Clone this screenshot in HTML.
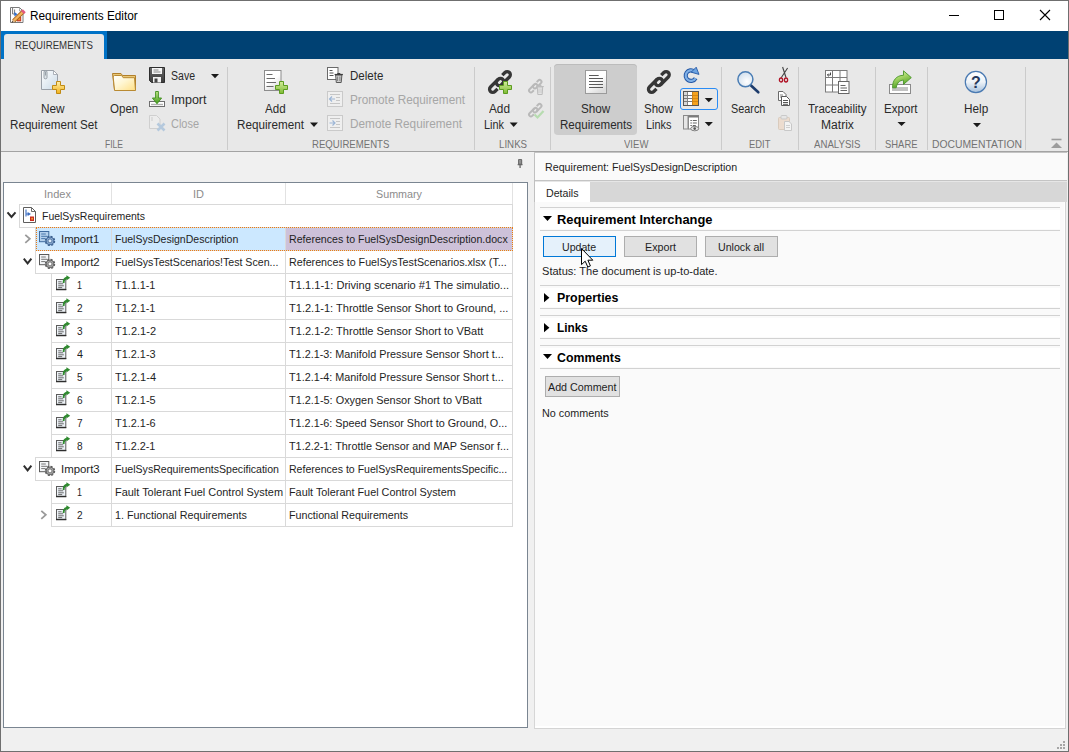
<!DOCTYPE html>
<html><head><meta charset="utf-8"><title>Requirements Editor</title>
<style>
html,body{margin:0;padding:0;}
body{width:1069px;height:752px;overflow:hidden;background:#f0f0f0;font-family:"Liberation Sans", sans-serif;position:relative;}
.t{position:absolute;white-space:pre;transform-origin:0 0;font-family:"Liberation Sans", sans-serif;}
.a{position:absolute;}
svg{position:absolute;overflow:visible;}
</style></head>
<body>
<div class="a" style="left:0px;top:0px;width:1069px;height:752px;background:#6f6f6f;"></div>
<div class="a" style="left:1px;top:1px;width:1067px;height:30px;background:#ffffff;"></div>
<div class="a" style="left:1px;top:31px;width:1067px;height:28px;background:#004173;"></div>
<div class="a" style="left:1px;top:31px;width:106px;height:28px;background:#0072c6;"></div>
<div class="a" style="left:4px;top:34px;width:100px;height:25px;background:#e8e8e8;border-radius:3px 3px 0 0;"></div>
<div class="a" style="left:1px;top:59px;width:1067px;height:92px;background:#e8e8e8;"></div>
<div class="a" style="left:1px;top:151px;width:1067px;height:1px;background:#a3a3a3;"></div>
<div class="a" style="left:1px;top:152px;width:1067px;height:599px;background:#f0f0f0;"></div>
<div class="a" style="left:227px;top:67px;width:1px;height:83px;background:#cbcbcb;"></div>
<div class="a" style="left:474px;top:67px;width:1px;height:83px;background:#cbcbcb;"></div>
<div class="a" style="left:550px;top:67px;width:1px;height:83px;background:#cbcbcb;"></div>
<div class="a" style="left:721px;top:67px;width:1px;height:83px;background:#cbcbcb;"></div>
<div class="a" style="left:798px;top:67px;width:1px;height:83px;background:#cbcbcb;"></div>
<div class="a" style="left:875px;top:67px;width:1px;height:83px;background:#cbcbcb;"></div>
<div class="a" style="left:927px;top:67px;width:1px;height:83px;background:#cbcbcb;"></div>
<div class="a" style="left:1025px;top:67px;width:1px;height:83px;background:#cbcbcb;"></div>
<div class="a" style="left:554px;top:64px;width:83px;height:71px;background:#cdcdcd;border-radius:4px;box-shadow:inset 0 1px 0 #bcbcbc;"></div>
<div class="a" style="left:680px;top:88px;width:38px;height:22px;background:transparent;box-sizing:border-box;border:1.5px solid #2a8cf5;border-radius:3px;"></div>
<div class="a" style="left:3px;top:182px;width:525px;height:546px;background:#ffffff;box-sizing:border-box;border:1px solid #7a8591;"></div>
<div class="a" style="left:111px;top:183px;width:1px;height:21px;background:#e2e2e2;"></div>
<div class="a" style="left:285px;top:183px;width:1px;height:21px;background:#e2e2e2;"></div>
<div class="a" style="left:512px;top:183px;width:1px;height:21px;background:#e2e2e2;"></div>
<div class="a" style="left:36px;top:227px;width:249px;height:23px;background:#cce8ff;"></div>
<div class="a" style="left:286px;top:227px;width:226px;height:23px;background:#cdc1d9;"></div>
<div class="a" style="left:19px;top:204px;width:494px;height:1px;background:#d9d9d9;"></div>
<div class="a" style="left:19px;top:227px;width:494px;height:1px;background:#d9d9d9;"></div>
<div class="a" style="left:35px;top:250px;width:478px;height:1px;background:#d9d9d9;"></div>
<div class="a" style="left:35px;top:273px;width:478px;height:1px;background:#d9d9d9;"></div>
<div class="a" style="left:51px;top:296px;width:462px;height:1px;background:#d9d9d9;"></div>
<div class="a" style="left:51px;top:319px;width:462px;height:1px;background:#d9d9d9;"></div>
<div class="a" style="left:51px;top:342px;width:462px;height:1px;background:#d9d9d9;"></div>
<div class="a" style="left:51px;top:365px;width:462px;height:1px;background:#d9d9d9;"></div>
<div class="a" style="left:51px;top:388px;width:462px;height:1px;background:#d9d9d9;"></div>
<div class="a" style="left:51px;top:411px;width:462px;height:1px;background:#d9d9d9;"></div>
<div class="a" style="left:51px;top:434px;width:462px;height:1px;background:#d9d9d9;"></div>
<div class="a" style="left:35px;top:457px;width:478px;height:1px;background:#d9d9d9;"></div>
<div class="a" style="left:35px;top:480px;width:478px;height:1px;background:#d9d9d9;"></div>
<div class="a" style="left:51px;top:503px;width:462px;height:1px;background:#d9d9d9;"></div>
<div class="a" style="left:51px;top:526px;width:462px;height:1px;background:#d9d9d9;"></div>
<div class="a" style="left:19px;top:204px;width:1px;height:24px;background:#d9d9d9;"></div>
<div class="a" style="left:512px;top:204px;width:1px;height:24px;background:#d9d9d9;"></div>
<div class="a" style="left:35px;top:227px;width:1px;height:24px;background:#d9d9d9;"></div>
<div class="a" style="left:512px;top:227px;width:1px;height:24px;background:#d9d9d9;"></div>
<div class="a" style="left:111px;top:227px;width:1px;height:24px;background:#d9d9d9;"></div>
<div class="a" style="left:285px;top:227px;width:1px;height:24px;background:#d9d9d9;"></div>
<div class="a" style="left:35px;top:250px;width:1px;height:24px;background:#d9d9d9;"></div>
<div class="a" style="left:512px;top:250px;width:1px;height:24px;background:#d9d9d9;"></div>
<div class="a" style="left:111px;top:250px;width:1px;height:24px;background:#d9d9d9;"></div>
<div class="a" style="left:285px;top:250px;width:1px;height:24px;background:#d9d9d9;"></div>
<div class="a" style="left:51px;top:273px;width:1px;height:24px;background:#d9d9d9;"></div>
<div class="a" style="left:512px;top:273px;width:1px;height:24px;background:#d9d9d9;"></div>
<div class="a" style="left:111px;top:273px;width:1px;height:24px;background:#d9d9d9;"></div>
<div class="a" style="left:285px;top:273px;width:1px;height:24px;background:#d9d9d9;"></div>
<div class="a" style="left:51px;top:296px;width:1px;height:24px;background:#d9d9d9;"></div>
<div class="a" style="left:512px;top:296px;width:1px;height:24px;background:#d9d9d9;"></div>
<div class="a" style="left:111px;top:296px;width:1px;height:24px;background:#d9d9d9;"></div>
<div class="a" style="left:285px;top:296px;width:1px;height:24px;background:#d9d9d9;"></div>
<div class="a" style="left:51px;top:319px;width:1px;height:24px;background:#d9d9d9;"></div>
<div class="a" style="left:512px;top:319px;width:1px;height:24px;background:#d9d9d9;"></div>
<div class="a" style="left:111px;top:319px;width:1px;height:24px;background:#d9d9d9;"></div>
<div class="a" style="left:285px;top:319px;width:1px;height:24px;background:#d9d9d9;"></div>
<div class="a" style="left:51px;top:342px;width:1px;height:24px;background:#d9d9d9;"></div>
<div class="a" style="left:512px;top:342px;width:1px;height:24px;background:#d9d9d9;"></div>
<div class="a" style="left:111px;top:342px;width:1px;height:24px;background:#d9d9d9;"></div>
<div class="a" style="left:285px;top:342px;width:1px;height:24px;background:#d9d9d9;"></div>
<div class="a" style="left:51px;top:365px;width:1px;height:24px;background:#d9d9d9;"></div>
<div class="a" style="left:512px;top:365px;width:1px;height:24px;background:#d9d9d9;"></div>
<div class="a" style="left:111px;top:365px;width:1px;height:24px;background:#d9d9d9;"></div>
<div class="a" style="left:285px;top:365px;width:1px;height:24px;background:#d9d9d9;"></div>
<div class="a" style="left:51px;top:388px;width:1px;height:24px;background:#d9d9d9;"></div>
<div class="a" style="left:512px;top:388px;width:1px;height:24px;background:#d9d9d9;"></div>
<div class="a" style="left:111px;top:388px;width:1px;height:24px;background:#d9d9d9;"></div>
<div class="a" style="left:285px;top:388px;width:1px;height:24px;background:#d9d9d9;"></div>
<div class="a" style="left:51px;top:411px;width:1px;height:24px;background:#d9d9d9;"></div>
<div class="a" style="left:512px;top:411px;width:1px;height:24px;background:#d9d9d9;"></div>
<div class="a" style="left:111px;top:411px;width:1px;height:24px;background:#d9d9d9;"></div>
<div class="a" style="left:285px;top:411px;width:1px;height:24px;background:#d9d9d9;"></div>
<div class="a" style="left:51px;top:434px;width:1px;height:24px;background:#d9d9d9;"></div>
<div class="a" style="left:512px;top:434px;width:1px;height:24px;background:#d9d9d9;"></div>
<div class="a" style="left:111px;top:434px;width:1px;height:24px;background:#d9d9d9;"></div>
<div class="a" style="left:285px;top:434px;width:1px;height:24px;background:#d9d9d9;"></div>
<div class="a" style="left:35px;top:457px;width:1px;height:24px;background:#d9d9d9;"></div>
<div class="a" style="left:512px;top:457px;width:1px;height:24px;background:#d9d9d9;"></div>
<div class="a" style="left:111px;top:457px;width:1px;height:24px;background:#d9d9d9;"></div>
<div class="a" style="left:285px;top:457px;width:1px;height:24px;background:#d9d9d9;"></div>
<div class="a" style="left:51px;top:480px;width:1px;height:24px;background:#d9d9d9;"></div>
<div class="a" style="left:512px;top:480px;width:1px;height:24px;background:#d9d9d9;"></div>
<div class="a" style="left:111px;top:480px;width:1px;height:24px;background:#d9d9d9;"></div>
<div class="a" style="left:285px;top:480px;width:1px;height:24px;background:#d9d9d9;"></div>
<div class="a" style="left:51px;top:503px;width:1px;height:24px;background:#d9d9d9;"></div>
<div class="a" style="left:512px;top:503px;width:1px;height:24px;background:#d9d9d9;"></div>
<div class="a" style="left:111px;top:503px;width:1px;height:24px;background:#d9d9d9;"></div>
<div class="a" style="left:285px;top:503px;width:1px;height:24px;background:#d9d9d9;"></div>
<div class="a" style="left:36px;top:227px;width:477px;height:24px;background:transparent;box-sizing:border-box;border:1px dotted #ea7a12;"></div>
<div class="a" style="left:534px;top:152px;width:533px;height:50px;background:#fafafa;"></div>
<div class="a" style="left:534px;top:202px;width:532px;height:527px;background:#fafafa;box-sizing:border-box;border-right:1px solid #d4d4d4;border-bottom:1px solid #d4d4d4;"></div>
<div class="a" style="left:535px;top:726px;width:529px;height:2px;background:#ffffff;"></div>
<div class="a" style="left:1064px;top:202px;width:1px;height:526px;background:#ffffff;"></div>
<div class="a" style="left:534px;top:152px;width:1px;height:50px;background:#c0c0c0;"></div>
<div class="a" style="left:534px;top:202px;width:1px;height:527px;background:#d6d6d6;"></div>
<div class="a" style="left:534px;top:152px;width:533px;height:1px;background:#c4c4c4;"></div>
<div class="a" style="left:535px;top:180px;width:532px;height:1px;background:#c4c4c4;"></div>
<div class="a" style="left:535px;top:181px;width:532px;height:1px;background:#e6e6e6;"></div>
<div class="a" style="left:535px;top:182px;width:55px;height:20px;background:#ffffff;"></div>
<div class="a" style="left:590px;top:182px;width:477px;height:20px;background:#d7d7d7;"></div>
<div class="a" style="left:540px;top:207px;width:520px;height:1px;background:#d2d2d2;"></div>
<div class="a" style="left:540px;top:230px;width:520px;height:1px;background:#d2d2d2;"></div>
<div class="a" style="left:540px;top:210px;width:520px;height:19px;background:#ffffff;"></div>
<div class="a" style="left:540px;top:285px;width:520px;height:1px;background:#d2d2d2;"></div>
<div class="a" style="left:540px;top:308px;width:520px;height:1px;background:#d2d2d2;"></div>
<div class="a" style="left:540px;top:288px;width:520px;height:19px;background:#ffffff;"></div>
<div class="a" style="left:540px;top:315px;width:520px;height:1px;background:#d2d2d2;"></div>
<div class="a" style="left:540px;top:338px;width:520px;height:1px;background:#d2d2d2;"></div>
<div class="a" style="left:540px;top:318px;width:520px;height:19px;background:#ffffff;"></div>
<div class="a" style="left:540px;top:345px;width:520px;height:1px;background:#d2d2d2;"></div>
<div class="a" style="left:540px;top:368px;width:520px;height:1px;background:#d2d2d2;"></div>
<div class="a" style="left:540px;top:348px;width:520px;height:19px;background:#ffffff;"></div>
<div class="a" style="left:543px;top:236px;width:73px;height:21px;background:#e5f1fb;box-sizing:border-box;border:1px solid #0078d7;"></div>
<div class="a" style="left:624px;top:236px;width:73px;height:21px;background:#e1e1e1;box-sizing:border-box;border:1px solid #adadad;"></div>
<div class="a" style="left:705px;top:236px;width:73px;height:21px;background:#e1e1e1;box-sizing:border-box;border:1px solid #adadad;"></div>
<div class="a" style="left:545px;top:376px;width:75px;height:21px;background:#e1e1e1;box-sizing:border-box;border:1px solid #adadad;"></div>
<svg width="1069" height="752" viewBox="0 0 1069 752" style="left:0;top:0;">
<defs>
<linearGradient id="gdoc" x1="0" y1="0" x2="1" y2="1"><stop offset="0" stop-color="#ffffff"/><stop offset="1" stop-color="#c9d9e6"/></linearGradient>
<linearGradient id="gdocw" x1="0" y1="0" x2="0.6" y2="1"><stop offset="0.55" stop-color="#ffffff"/><stop offset="1" stop-color="#dcdcdc"/></linearGradient>
<linearGradient id="gyel" x1="0" y1="0" x2="0" y2="1"><stop offset="0" stop-color="#fff0a8"/><stop offset="1" stop-color="#f2b21c"/></linearGradient>
<linearGradient id="ggrn" x1="0" y1="0" x2="0" y2="1"><stop offset="0" stop-color="#d4ec9c"/><stop offset="1" stop-color="#7dbb33"/></linearGradient>
<linearGradient id="ggrn2" x1="0" y1="0" x2="0" y2="1"><stop offset="0" stop-color="#c6e88a"/><stop offset="1" stop-color="#3f9a18"/></linearGradient>
<linearGradient id="gfold" x1="0" y1="0" x2="1" y2="1"><stop offset="0" stop-color="#ffffff"/><stop offset="1" stop-color="#ffe28a"/></linearGradient>
<linearGradient id="gblue" x1="0" y1="0" x2="0" y2="1"><stop offset="0" stop-color="#9cc4ee"/><stop offset="1" stop-color="#2a63b4"/></linearGradient>
<radialGradient id="glens" cx="0.6" cy="0.65" r="0.7"><stop offset="0" stop-color="#ffffff"/><stop offset="1" stop-color="#cfdeec"/></radialGradient>
<linearGradient id="ghelp" x1="0" y1="0" x2="0" y2="1"><stop offset="0" stop-color="#ffffff"/><stop offset="0.5" stop-color="#eef3f8"/><stop offset="1" stop-color="#a4bfdc"/></linearGradient>
<linearGradient id="gexp" x1="0" y1="0" x2="0.4" y2="1"><stop offset="0" stop-color="#e6f5cc"/><stop offset="0.45" stop-color="#a9d86a"/><stop offset="1" stop-color="#4a9c1e"/></linearGradient>
<linearGradient id="gfold2" x1="0" y1="0" x2="1" y2="1"><stop offset="0" stop-color="#ffffff"/><stop offset="0.45" stop-color="#fff6d2"/><stop offset="1" stop-color="#ffdf85"/></linearGradient>
<linearGradient id="gsave" x1="0" y1="0" x2="0" y2="1"><stop offset="0" stop-color="#6a6a6a"/><stop offset="1" stop-color="#3c3c3c"/></linearGradient>
</defs><g transform="translate(10,7)"><path d="M0.5,0.5 h9 l3.5,3.5 v11.5 h-12.5 z" fill="#fff" stroke="#7a7a7a"/><path d="M9.5,0.5 v3.5 h3.5" fill="none" stroke="#9a9a9a" stroke-width="0.8"/><path d="M2.6,1 v6 h2" fill="none" stroke="#666" stroke-width="0.9"/><path d="M4.6,2.5 v5" stroke="#555" stroke-width="0.8"/><polygon points="4.4,5 7.6,7.2 4.4,9.6" fill="#2f6fd0"/><rect x="7" y="10" width="4.2" height="4.4" fill="#c83a22"/><rect x="8" y="11" width="2.2" height="2.2" fill="#ee8a2a"/><path d="M3.6,13.9 L13.3,4.6" stroke="#a8641e" stroke-width="4.2"/><path d="M3.9,13.6 L13,4.9" stroke="#f3b35c" stroke-width="2.2"/><path d="M12.4,5.5 L14.3,3.7" stroke="#e2587f" stroke-width="4.2"/><polygon points="1.6,15.8 2.6,12.2 5.4,14.8" fill="#d9b48a"/><polygon points="1.6,15.8 2.1,14 3.5,15.3" fill="#2a2a2a"/></g><path d="M949,15.5 h10" stroke="#000" stroke-width="1"/><rect x="994.5" y="10.5" width="9" height="9" fill="none" stroke="#000" stroke-width="1"/><path d="M1040,10 l10,10 M1050,10 l-10,10" stroke="#000" stroke-width="1.1"/><g transform="translate(41,70)"><path d="M0.5,0.5 h12 l4,4 v15 h-16 z" fill="url(#gdoc)" stroke="#9aa0a8"/><path d="M12.5,0.5 v4 h4 z" fill="#ffffff" stroke="#9aa0a8" stroke-width="0.8"/><rect x="3" y="0.8" width="3" height="8" rx="1.2" fill="#dfe5ea" stroke="#8f979f" stroke-width="0.9"/><path d="M4.5,1.5 v4" stroke="#9aa2aa" stroke-width="1"/></g><g transform="translate(52,81)"><path d="M4.5,0.5 h4 v4 h4 v4 h-4 v4 h-4 v-4 h-4 v-4 h4 z" fill="url(#gyel)" stroke="#c08a14"/></g><g transform="translate(112,70)"><path d="M0.5,3.5 h8.5 l1.5,2 h13 v14.5 h-21 z" fill="#e9c878" stroke="#b17f2a"/><path d="M2.6,20.5 L1.2,7 Q1.1,5.5 2.6,5.5 h7 l1.6,2.2 h11.3 L23.5,20.5 z" fill="url(#gfold2)" stroke="#b98a32"/></g><g transform="translate(149,67)"><path d="M0.5,0.5 h15 v15 h-13 l-2,-2 z" fill="url(#gsave)" stroke="#2e2e2e"/><rect x="3" y="1" width="10" height="6" fill="#f6f6f6"/><path d="M4.5,3 h5 M4.5,5 h7" stroke="#8a8a8a" stroke-width="1"/><rect x="4" y="10" width="8" height="5.5" fill="#f2f2f2"/><rect x="5.5" y="11.5" width="3" height="4" fill="#444"/></g><polygon points="211,74 219,74 215.0,78.3" fill="#1a1a1a"/><g transform="translate(149,91)"><rect x="0.5" y="10.5" width="15" height="5" fill="#ffffff" stroke="#6e6e6e"/><path d="M2,13.5 h12" stroke="#b0b0b0" stroke-width="1.4"/><path d="M6.6,0.5 h2.8 v6.5 h3.2 L8,12.8 L3.4,7 h3.2 z" fill="url(#ggrn2)" stroke="#3c8c1c" stroke-width="0.9"/></g><g transform="translate(149,115)"><path d="M0.5,0.5 h7 l3.5,3.5 v9.5 h-10.5 z" fill="#ececec" stroke="#cfcfcf"/><path d="M3,2 v4" stroke="#d2d2d2" stroke-width="1.2"/><path d="M8.5,8.5 l7,7 M15.5,8.5 l-7,7" stroke="#b5c9dd" stroke-width="2.6"/></g><g transform="translate(264,70)"><rect x="0.5" y="0.5" width="16.5" height="20" fill="url(#gdocw)" stroke="#8c8c8c"/><path d="M2.5,4.5 h6 M2.5,8.5 h8.5 M2.5,12.5 h9.5 M2.5,16.5 h7" stroke="#6a6a6a" stroke-width="1"/></g><g transform="translate(275,81)"><path d="M4.5,0.5 h4 v4 h4 v4 h-4 v4 h-4 v-4 h-4 v-4 h4 z" fill="url(#ggrn)" stroke="#5c9c20"/></g><polygon points="310,122.6 318,122.6 314.0,127.0" fill="#1a1a1a"/><g transform="translate(327,67)"><rect x="0.5" y="0.5" width="10.5" height="12" fill="#ffffff" stroke="#6a6a6a"/><path d="M2.5,3.5 h3 M2.5,6 h4 M2.5,8.5 h4" stroke="#555" stroke-width="1"/><path d="M8.6,8 h6.3 l-0.7,7.5 h-4.9 z" fill="#cfcfcf" stroke="#4a4a4a" stroke-width="0.9"/><path d="M7.6,7.5 h8.3" stroke="#3e3e3e" stroke-width="1.2"/><path d="M10.3,6.6 h3" stroke="#3e3e3e" stroke-width="1.2"/><path d="M10.6,9.5 v4.5 M12.9,9.5 v4.5" stroke="#6a6a6a" stroke-width="0.8"/></g><g transform="translate(327,91)"><rect x="0.5" y="0.5" width="15" height="15" fill="#efefef" stroke="#cacaca"/><path d="M3,3.5 h10 M9,6.5 h4 M9,9.5 h4 M3,12.5 h10" stroke="#c6c6c6" stroke-width="1"/><path d="M2.5,8 h5.5 M5,5.5 L2.5,8 L5,10.5" fill="none" stroke="#9db6d6" stroke-width="1.2"/></g><g transform="translate(327,115)"><rect x="0.5" y="0.5" width="15" height="15" fill="#efefef" stroke="#cacaca"/><path d="M3,3.5 h10 M9,6.5 h4 M9,9.5 h4 M3,12.5 h10" stroke="#c6c6c6" stroke-width="1"/><path d="M2.5,8 h5.5 M5.5,5.5 L8,8 L5.5,10.5" fill="none" stroke="#9db6d6" stroke-width="1.2"/></g><g transform="translate(488,70)"><g transform="translate(11.95,12.0) rotate(-45)" fill="none" stroke="#363636" stroke-width="3.3"><path d="M-6.5,3.15 L-10.25,3.15 A3.15,3.15 0 0 1 -10.25,-3.15 L0.75,-3.15 A3.15,3.15 0 0 1 0.75,3.15 L-0.9,3.15"/><path d="M6.5,-3.15 L10.25,-3.15 A3.15,3.15 0 0 1 10.25,3.15 L-0.75,3.15 A3.15,3.15 0 0 1 -0.75,-3.15 L0.9,-3.15"/></g></g><g transform="translate(499,81)"><path d="M4.5,0.5 h4 v4 h4 v4 h-4 v4 h-4 v-4 h-4 v-4 h4 z" fill="url(#ggrn)" stroke="#5c9c20"/></g><polygon points="509.7,122.6 517.7,122.6 513.7,127.0" fill="#1a1a1a"/><g transform="translate(528,79)"><g transform="scale(0.6)"><g transform="translate(12.1,12.0) rotate(-45)" fill="none" stroke="#b9b9b9" stroke-width="3.2"><path d="M-6.5,3.15 L-10.25,3.15 A3.15,3.15 0 0 1 -10.25,-3.15 L0.75,-3.15 A3.15,3.15 0 0 1 0.75,3.15 L-0.9,3.15"/><path d="M6.5,-3.15 L10.25,-3.15 A3.15,3.15 0 0 1 10.25,3.15 L-0.75,3.15 A3.15,3.15 0 0 1 -0.75,-3.15 L0.9,-3.15"/></g></g><path d="M9.3,8 h5.4 l-0.5,7.5 h-4.4 z" fill="#e4e4e4" stroke="#bdbdbd" stroke-width="1"/><path d="M8.2,7.5 h7.6 M10.6,6.3 h2.8" stroke="#bdbdbd" stroke-width="1.2"/><path d="M11,9.5 v4.5 M13,9.5 v4.5" stroke="#c4c4c4" stroke-width="0.8"/></g><g transform="translate(528,103)"><g transform="scale(0.6)"><g transform="translate(12.1,12.0) rotate(-45)" fill="none" stroke="#b9b9b9" stroke-width="3.2"><path d="M-6.5,3.15 L-10.25,3.15 A3.15,3.15 0 0 1 -10.25,-3.15 L0.75,-3.15 A3.15,3.15 0 0 1 0.75,3.15 L-0.9,3.15"/><path d="M6.5,-3.15 L10.25,-3.15 A3.15,3.15 0 0 1 10.25,3.15 L-0.75,3.15 A3.15,3.15 0 0 1 -0.75,-3.15 L0.9,-3.15"/></g></g><path d="M6.5,11.5 L9.5,14.5 L15.5,8" fill="none" stroke="#b7dcb0" stroke-width="2.2"/></g><g transform="translate(585,70)"><rect x="0.5" y="0.5" width="21" height="23" fill="url(#gdocw)" stroke="#9a9a9a"/><path d="M4,5.5 h9.7 M4,8.5 h14 M4,11.5 h14 M4,14.5 h14 M4,17.5 h14" stroke="#5a5a5a" stroke-width="1"/></g><g transform="translate(646.7,70)"><g transform="translate(12.15,12.0) rotate(-45)" fill="none" stroke="#363636" stroke-width="3.3"><path d="M-6.5,3.15 L-10.25,3.15 A3.15,3.15 0 0 1 -10.25,-3.15 L0.75,-3.15 A3.15,3.15 0 0 1 0.75,3.15 L-0.9,3.15"/><path d="M6.5,-3.15 L10.25,-3.15 A3.15,3.15 0 0 1 10.25,3.15 L-0.75,3.15 A3.15,3.15 0 0 1 -0.75,-3.15 L0.9,-3.15"/></g></g><g transform="translate(683,67)"><path d="M11.2,4.4 A5.3,5.3 0 1 0 12.6,11.2" fill="none" stroke="#2659a6" stroke-width="4.2"/><path d="M11.2,4.4 A5.3,5.3 0 1 0 12.6,11.2" fill="none" stroke="#7fb0e6" stroke-width="2.2"/><polygon points="8.2,5.2 13.2,0.2 16,7.4" fill="#6da4e2" stroke="#2659a6" stroke-width="0.9"/></g><g transform="translate(683,91)"><rect x="0.5" y="0.5" width="15" height="14" fill="#ffffff" stroke="#555"/><rect x="1" y="1" width="3.5" height="13" fill="#d8d8d8"/><rect x="9.5" y="1" width="5.5" height="13" fill="#f5a21e"/><path d="M1,4.5 h14 M1,7.5 h14 M1,10.5 h14" stroke="#7a7a7a" stroke-width="1"/><path d="M9.5,1 v13" stroke="#c67a10" stroke-width="0.9"/><path d="M4.5,1 v13" stroke="#7a7a7a" stroke-width="0.9"/><path d="M9.5,4.5 h5.5 M9.5,7.5 h5.5 M9.5,10.5 h5.5" stroke="#d88912" stroke-width="1"/><rect x="0.5" y="0.5" width="15" height="14" fill="none" stroke="#555"/></g><polygon points="704.7,98 712.9,98 708.8,102.3" fill="#1a1a1a"/><g transform="translate(683,115)"><rect x="0.5" y="0.5" width="4.5" height="13.5" fill="#e6e6e6" stroke="#8a8a8a"/><rect x="5.5" y="0.5" width="10" height="13.5" fill="#ffffff" stroke="#8a8a8a"/><rect x="5.5" y="0.5" width="10" height="2" fill="#7a7a7a"/><path d="M7.5,5.5 h1.2 M7.5,8 h1.2 M7.5,10.5 h1.2" stroke="#444" stroke-width="1.2"/><path d="M9.8,5.5 h4 M9.8,8 h4 M9.8,10.5 h3" stroke="#666" stroke-width="1"/><ellipse cx="11.7" cy="13.6" rx="4" ry="2.2" fill="#e6e6e6" stroke="#777" stroke-width="0.9"/><circle cx="11.7" cy="13.6" r="1.3" fill="#555"/></g><polygon points="704.7,122 712.9,122 708.8,126.3" fill="#1a1a1a"/><g transform="translate(737,70)"><path d="M14,15.5 L21.3,22.3" stroke="#1d3c6c" stroke-width="2.6" stroke-linecap="round"/><circle cx="8.4" cy="9.3" r="7.5" fill="url(#glens)" stroke="#4a7db4" stroke-width="1.5"/></g><g transform="translate(778,67)"><path d="M4.6,0 L8,10.5 M9.6,1 L3.2,10.8" stroke="#444" stroke-width="1.1"/><ellipse cx="3" cy="13" rx="1.6" ry="2" fill="none" stroke="#b01224" stroke-width="1.3"/><ellipse cx="8" cy="13" rx="1.6" ry="2" fill="none" stroke="#b01224" stroke-width="1.3"/></g><g transform="translate(778,91)"><path d="M0.5,0.5 h4.5 l3,3 v6 h-7.5 z" fill="#fff" stroke="#6a6a6a"/><path d="M2,4 h3 M2,6 h4" stroke="#777" stroke-width="0.9"/><path d="M3.5,5.5 h5 l3,3 v6 h-8 z" fill="#fff" stroke="#5a5a5a"/><path d="M5,9.5 h5 M5,11.5 h5 M5,13.3 h5" stroke="#555" stroke-width="1"/></g><g transform="translate(778,115)"><rect x="0.5" y="2.5" width="11" height="12" rx="1" fill="#ecdccf" stroke="#d9cbbd"/><rect x="3" y="0.5" width="6" height="3.5" rx="1" fill="#e6e6e6" stroke="#c9c9c9"/><path d="M6.5,6.5 h4.5 l2.5,2.5 v6.5 h-7 z" fill="#f3f3f3" stroke="#c8c8c8"/><path d="M8,10.5 h4 M8,12.5 h4" stroke="#cfcfcf" stroke-width="1"/></g><g transform="translate(825,70)"><rect x="0.5" y="0.5" width="21.5" height="21.5" fill="#ffffff" stroke="#7a7a7a"/><path d="M7.5,0.5 v21.5 M15,0.5 v21.5 M0.5,7.5 h21.5 M0.5,15 h21.5" stroke="#7a7a7a" stroke-width="1"/><path d="M5.5,2.5 v2.5 h-3 M3.8,3.6 L2.4,5 L3.8,6.4" fill="none" stroke="#333" stroke-width="0.9"/><rect x="13.5" y="11.5" width="10.5" height="12" fill="#ffffff" stroke="#666"/><path d="M15.5,15.5 h5 M15.5,18 h6.5 M15.5,20.5 h6.5" stroke="#666" stroke-width="1"/></g><g transform="translate(888,70)"><rect x="1.5" y="14.5" width="21" height="9" fill="#ffffff" stroke="#8a8a8a"/><rect x="4" y="17" width="16" height="4" fill="#c2c2c2"/><path d="M4.6,17.8 C4.2,10.5 8.5,5.3 15.5,5.3 V0.8 L23.3,7.6 L15.5,14.4 V10.2 C11.8,10.2 9.2,12.3 8.2,17.8 Z" fill="url(#gexp)" stroke="#4a962a" stroke-width="0.9"/></g><polygon points="897.5,122 905.6,122 901.55,126" fill="#1a1a1a"/><g transform="translate(964,70)"><circle cx="11.9" cy="12" r="10.6" fill="url(#ghelp)" stroke="#4a7ab2" stroke-width="1.2"/><text x="12" y="17.7" text-anchor="middle" font-family="Liberation Sans, sans-serif" font-weight="700" font-size="16" fill="#27395c">?</text></g><polygon points="973,123 981,123 977.0,127.2" fill="#1a1a1a"/><path d="M1051.5,139.5 h10" stroke="#9c9c9c" stroke-width="1.6"/><polygon points="1051,148 1062,148 1056.5,142.5" fill="#9c9c9c"/><rect x="518" y="159" width="4.2" height="6.2" rx="1" fill="#6e6e6e"/><rect x="519.4" y="160" width="1.2" height="3.6" fill="#a8a8a8"/><path d="M517.6,164.7 h5" stroke="#666" stroke-width="1"/><rect x="519.3" y="165" width="1.6" height="3" fill="#808080"/><polyline points="7.5,212.3 11.5,217 15.5,212.3" fill="none" stroke="#2e2e2e" stroke-width="2.0"/><polyline points="25.3,234.8 29.8,238.8 25.3,242.8" fill="none" stroke="#9a9a9a" stroke-width="1.8"/><polyline points="23.8,258.7 27.6,263.4 31.4,258.7" fill="none" stroke="#2e2e2e" stroke-width="2.0"/><polyline points="23.8,465.7 27.6,470.4 31.4,465.7" fill="none" stroke="#2e2e2e" stroke-width="2.0"/><polyline points="41.3,510.8 45.8,514.8 41.3,518.8" fill="none" stroke="#9a9a9a" stroke-width="1.8"/><g transform="translate(23,207)"><path d="M0.5,0.5 h8 l4,4 v11 h-12 z" fill="#fff" stroke="#5e5e5e"/><path d="M8.5,0.5 v4 h4" fill="none" stroke="#5e5e5e" stroke-width="0.9"/><path d="M3,2.5 v7 M3,7 h2.5" stroke="#3a6cc0" stroke-width="1.1" fill="none"/><polygon points="4.6,5 8,7 4.6,9" fill="#3a6cc0"/><rect x="7" y="9.5" width="4" height="4.5" fill="#c8281e"/><rect x="8.2" y="10.8" width="1.8" height="1.8" fill="#f0a030"/></g><g transform="translate(39,227)"><rect x="0.5" y="4.5" width="9.3" height="10.2" fill="#b4d0ec" stroke="#3f6b9f"/><path d="M2.2,7 h4.6 M2.2,9.3 h6 M2.2,11.6 h4" stroke="#4a78ac" stroke-width="1"/><circle cx="11" cy="13.9" r="4.2" fill="none" stroke="#3a5f8f" stroke-width="2.0" stroke-dasharray="1.9 1.4"/><circle cx="11" cy="13.9" r="3.9" fill="#8fb0d6" stroke="#3a5f8f" stroke-width="0.9"/><circle cx="11" cy="13.9" r="2.0" fill="#dcecfb" stroke="#3a5f8f" stroke-width="0.8"/></g><g transform="translate(39,250)"><rect x="0.5" y="4.5" width="9.3" height="10.2" fill="#f4f6f8" stroke="#5a5a5a"/><path d="M2.2,7 h4.6 M2.2,9.3 h6 M2.2,11.6 h4" stroke="#777777" stroke-width="1"/><circle cx="11" cy="13.9" r="4.2" fill="none" stroke="#5c5c5c" stroke-width="2.0" stroke-dasharray="1.9 1.4"/><circle cx="11" cy="13.9" r="3.9" fill="#ababab" stroke="#5c5c5c" stroke-width="0.9"/><circle cx="11" cy="13.9" r="2.0" fill="#ffffff" stroke="#5c5c5c" stroke-width="0.8"/></g><g transform="translate(56,273)"><rect x="0.5" y="6.5" width="9.3" height="9.8" fill="#eef3f8" stroke="#5c5c5c"/><path d="M0,16.6 h10.3" stroke="#2e2e2e" stroke-width="1.3"/><path d="M2.2,8.8 h3.4 M2.2,10.8 h5 M2.2,12.8 h5.6 M2.2,14.6 h4" stroke="#5a5a5a" stroke-width="0.9"/><path d="M7.6,10 C7.6,6.8 9,5 11.2,4.8" fill="none" stroke="#2f8a2f" stroke-width="1.9"/><polygon points="10.4,2.2 14.2,4.8 10.4,7.4" fill="#2f8a2f"/></g><g transform="translate(56,296)"><rect x="0.5" y="6.5" width="9.3" height="9.8" fill="#eef3f8" stroke="#5c5c5c"/><path d="M0,16.6 h10.3" stroke="#2e2e2e" stroke-width="1.3"/><path d="M2.2,8.8 h3.4 M2.2,10.8 h5 M2.2,12.8 h5.6 M2.2,14.6 h4" stroke="#5a5a5a" stroke-width="0.9"/><path d="M7.6,10 C7.6,6.8 9,5 11.2,4.8" fill="none" stroke="#2f8a2f" stroke-width="1.9"/><polygon points="10.4,2.2 14.2,4.8 10.4,7.4" fill="#2f8a2f"/></g><g transform="translate(56,319)"><rect x="0.5" y="6.5" width="9.3" height="9.8" fill="#eef3f8" stroke="#5c5c5c"/><path d="M0,16.6 h10.3" stroke="#2e2e2e" stroke-width="1.3"/><path d="M2.2,8.8 h3.4 M2.2,10.8 h5 M2.2,12.8 h5.6 M2.2,14.6 h4" stroke="#5a5a5a" stroke-width="0.9"/><path d="M7.6,10 C7.6,6.8 9,5 11.2,4.8" fill="none" stroke="#2f8a2f" stroke-width="1.9"/><polygon points="10.4,2.2 14.2,4.8 10.4,7.4" fill="#2f8a2f"/></g><g transform="translate(56,342)"><rect x="0.5" y="6.5" width="9.3" height="9.8" fill="#eef3f8" stroke="#5c5c5c"/><path d="M0,16.6 h10.3" stroke="#2e2e2e" stroke-width="1.3"/><path d="M2.2,8.8 h3.4 M2.2,10.8 h5 M2.2,12.8 h5.6 M2.2,14.6 h4" stroke="#5a5a5a" stroke-width="0.9"/><path d="M7.6,10 C7.6,6.8 9,5 11.2,4.8" fill="none" stroke="#2f8a2f" stroke-width="1.9"/><polygon points="10.4,2.2 14.2,4.8 10.4,7.4" fill="#2f8a2f"/></g><g transform="translate(56,365)"><rect x="0.5" y="6.5" width="9.3" height="9.8" fill="#eef3f8" stroke="#5c5c5c"/><path d="M0,16.6 h10.3" stroke="#2e2e2e" stroke-width="1.3"/><path d="M2.2,8.8 h3.4 M2.2,10.8 h5 M2.2,12.8 h5.6 M2.2,14.6 h4" stroke="#5a5a5a" stroke-width="0.9"/><path d="M7.6,10 C7.6,6.8 9,5 11.2,4.8" fill="none" stroke="#2f8a2f" stroke-width="1.9"/><polygon points="10.4,2.2 14.2,4.8 10.4,7.4" fill="#2f8a2f"/></g><g transform="translate(56,388)"><rect x="0.5" y="6.5" width="9.3" height="9.8" fill="#eef3f8" stroke="#5c5c5c"/><path d="M0,16.6 h10.3" stroke="#2e2e2e" stroke-width="1.3"/><path d="M2.2,8.8 h3.4 M2.2,10.8 h5 M2.2,12.8 h5.6 M2.2,14.6 h4" stroke="#5a5a5a" stroke-width="0.9"/><path d="M7.6,10 C7.6,6.8 9,5 11.2,4.8" fill="none" stroke="#2f8a2f" stroke-width="1.9"/><polygon points="10.4,2.2 14.2,4.8 10.4,7.4" fill="#2f8a2f"/></g><g transform="translate(56,411)"><rect x="0.5" y="6.5" width="9.3" height="9.8" fill="#eef3f8" stroke="#5c5c5c"/><path d="M0,16.6 h10.3" stroke="#2e2e2e" stroke-width="1.3"/><path d="M2.2,8.8 h3.4 M2.2,10.8 h5 M2.2,12.8 h5.6 M2.2,14.6 h4" stroke="#5a5a5a" stroke-width="0.9"/><path d="M7.6,10 C7.6,6.8 9,5 11.2,4.8" fill="none" stroke="#2f8a2f" stroke-width="1.9"/><polygon points="10.4,2.2 14.2,4.8 10.4,7.4" fill="#2f8a2f"/></g><g transform="translate(56,434)"><rect x="0.5" y="6.5" width="9.3" height="9.8" fill="#eef3f8" stroke="#5c5c5c"/><path d="M0,16.6 h10.3" stroke="#2e2e2e" stroke-width="1.3"/><path d="M2.2,8.8 h3.4 M2.2,10.8 h5 M2.2,12.8 h5.6 M2.2,14.6 h4" stroke="#5a5a5a" stroke-width="0.9"/><path d="M7.6,10 C7.6,6.8 9,5 11.2,4.8" fill="none" stroke="#2f8a2f" stroke-width="1.9"/><polygon points="10.4,2.2 14.2,4.8 10.4,7.4" fill="#2f8a2f"/></g><g transform="translate(39,457)"><rect x="0.5" y="4.5" width="9.3" height="10.2" fill="#f4f6f8" stroke="#5a5a5a"/><path d="M2.2,7 h4.6 M2.2,9.3 h6 M2.2,11.6 h4" stroke="#777777" stroke-width="1"/><circle cx="11" cy="13.9" r="4.2" fill="none" stroke="#5c5c5c" stroke-width="2.0" stroke-dasharray="1.9 1.4"/><circle cx="11" cy="13.9" r="3.9" fill="#ababab" stroke="#5c5c5c" stroke-width="0.9"/><circle cx="11" cy="13.9" r="2.0" fill="#ffffff" stroke="#5c5c5c" stroke-width="0.8"/></g><g transform="translate(56,480)"><rect x="0.5" y="6.5" width="9.3" height="9.8" fill="#eef3f8" stroke="#5c5c5c"/><path d="M0,16.6 h10.3" stroke="#2e2e2e" stroke-width="1.3"/><path d="M2.2,8.8 h3.4 M2.2,10.8 h5 M2.2,12.8 h5.6 M2.2,14.6 h4" stroke="#5a5a5a" stroke-width="0.9"/><path d="M7.6,10 C7.6,6.8 9,5 11.2,4.8" fill="none" stroke="#2f8a2f" stroke-width="1.9"/><polygon points="10.4,2.2 14.2,4.8 10.4,7.4" fill="#2f8a2f"/></g><g transform="translate(56,503)"><rect x="0.5" y="6.5" width="9.3" height="9.8" fill="#eef3f8" stroke="#5c5c5c"/><path d="M0,16.6 h10.3" stroke="#2e2e2e" stroke-width="1.3"/><path d="M2.2,8.8 h3.4 M2.2,10.8 h5 M2.2,12.8 h5.6 M2.2,14.6 h4" stroke="#5a5a5a" stroke-width="0.9"/><path d="M7.6,10 C7.6,6.8 9,5 11.2,4.8" fill="none" stroke="#2f8a2f" stroke-width="1.9"/><polygon points="10.4,2.2 14.2,4.8 10.4,7.4" fill="#2f8a2f"/></g><polygon points="543,216 552,216 547.5,221" fill="#000"/><polygon points="544,293 544,302.3 549.4,297.65" fill="#000"/><polygon points="544,323 544,332.3 549.4,327.65" fill="#000"/><polygon points="543,354 552,354 547.5,359" fill="#000"/><rect x="1063" y="741" width="2" height="2" fill="#a6a6a6"/><rect x="1060" y="744" width="2" height="2" fill="#a6a6a6"/><rect x="1063" y="744" width="2" height="2" fill="#a6a6a6"/><rect x="1057" y="747" width="2" height="2" fill="#a6a6a6"/><rect x="1060" y="747" width="2" height="2" fill="#a6a6a6"/><rect x="1063" y="747" width="2" height="2" fill="#a6a6a6"/><g transform="translate(581,248)"><polygon points="0.5,0.5 0.5,16.6 4.2,13.2 6.8,19 9.4,17.9 6.9,12.2 11.8,12.2" fill="#fff" stroke="#000" stroke-width="1"/></g></svg>
<span class="t" style="left:29.8px;top:7.64px;font-size:12px;line-height:16px;color:#000;transform:scaleX(0.9855);">Requirements Editor</span>
<span class="t" style="left:15.0px;top:38.49px;font-size:11px;line-height:14px;color:#333;transform:scaleX(0.8801);">REQUIREMENTS</span>
<span class="t" style="left:41.4px;top:101.14px;font-size:12px;line-height:16px;color:#2a2a2a;transform:scaleX(0.9827);">New</span>
<span class="t" style="left:9.6px;top:117.14px;font-size:12px;line-height:16px;color:#2a2a2a;transform:scaleX(0.9706);">Requirement Set</span>
<span class="t" style="left:109.8px;top:101.14px;font-size:12px;line-height:16px;color:#2a2a2a;transform:scaleX(0.9605);">Open</span>
<span class="t" style="left:171.0px;top:68.14px;font-size:12px;line-height:16px;color:#2a2a2a;transform:scaleX(0.8772);">Save</span>
<span class="t" style="left:171.0px;top:92.14px;font-size:12px;line-height:16px;color:#2a2a2a;transform:scaleX(1.0436);">Import</span>
<span class="t" style="left:171.0px;top:116.14px;font-size:12px;line-height:16px;color:#a6a6a6;transform:scaleX(0.9124);">Close</span>
<span class="t" style="left:105.0px;top:136.79px;font-size:11px;line-height:14px;color:#737373;transform:scaleX(0.7747);">FILE</span>
<span class="t" style="left:265.4px;top:101.14px;font-size:12px;line-height:16px;color:#2a2a2a;transform:scaleX(0.9644);">Add</span>
<span class="t" style="left:236.6px;top:117.14px;font-size:12px;line-height:16px;color:#2a2a2a;transform:scaleX(0.9738);">Requirement</span>
<span class="t" style="left:349.7px;top:68.14px;font-size:12px;line-height:16px;color:#2a2a2a;transform:scaleX(0.9600);">Delete</span>
<span class="t" style="left:350.0px;top:92.14px;font-size:12px;line-height:16px;color:#a6a6a6;transform:scaleX(0.9796);">Promote Requirement</span>
<span class="t" style="left:350.0px;top:116.14px;font-size:12px;line-height:16px;color:#a6a6a6;transform:scaleX(0.9819);">Demote Requirement</span>
<span class="t" style="left:312.3px;top:136.79px;font-size:11px;line-height:14px;color:#737373;transform:scaleX(0.8733);">REQUIREMENTS</span>
<span class="t" style="left:489.0px;top:101.14px;font-size:12px;line-height:16px;color:#2a2a2a;transform:scaleX(0.9832);">Add</span>
<span class="t" style="left:483.5px;top:117.14px;font-size:12px;line-height:16px;color:#2a2a2a;transform:scaleX(0.9084);">Link</span>
<span class="t" style="left:498.5px;top:136.79px;font-size:11px;line-height:14px;color:#737373;transform:scaleX(0.8837);">LINKS</span>
<span class="t" style="left:580.7px;top:101.14px;font-size:12px;line-height:16px;color:#2a2a2a;transform:scaleX(0.9757);">Show</span>
<span class="t" style="left:559.5px;top:117.14px;font-size:12px;line-height:16px;color:#2a2a2a;transform:scaleX(0.9638);">Requirements</span>
<span class="t" style="left:643.6px;top:101.14px;font-size:12px;line-height:16px;color:#2a2a2a;transform:scaleX(0.9590);">Show</span>
<span class="t" style="left:645.5px;top:117.14px;font-size:12px;line-height:16px;color:#2a2a2a;transform:scaleX(0.9102);">Links</span>
<span class="t" style="left:623.6px;top:136.79px;font-size:11px;line-height:14px;color:#737373;transform:scaleX(0.8676);">VIEW</span>
<span class="t" style="left:730.6px;top:101.14px;font-size:12px;line-height:16px;color:#2a2a2a;transform:scaleX(0.9045);">Search</span>
<span class="t" style="left:749.0px;top:136.79px;font-size:11px;line-height:14px;color:#737373;transform:scaleX(0.8539);">EDIT</span>
<span class="t" style="left:807.5px;top:101.14px;font-size:12px;line-height:16px;color:#2a2a2a;transform:scaleX(0.9602);">Traceability</span>
<span class="t" style="left:820.6px;top:117.14px;font-size:12px;line-height:16px;color:#2a2a2a;transform:scaleX(1.0070);">Matrix</span>
<span class="t" style="left:813.5px;top:136.79px;font-size:11px;line-height:14px;color:#737373;transform:scaleX(0.8774);">ANALYSIS</span>
<span class="t" style="left:884.0px;top:101.14px;font-size:12px;line-height:16px;color:#2a2a2a;transform:scaleX(0.9658);">Export</span>
<span class="t" style="left:885.0px;top:136.79px;font-size:11px;line-height:14px;color:#737373;transform:scaleX(0.8574);">SHARE</span>
<span class="t" style="left:963.8px;top:101.14px;font-size:12px;line-height:16px;color:#2a2a2a;transform:scaleX(0.9803);">Help</span>
<span class="t" style="left:931.5px;top:136.79px;font-size:11px;line-height:14px;color:#737373;transform:scaleX(0.9411);">DOCUMENTATION</span>
<span class="t" style="left:44.4px;top:186.69px;font-size:11px;line-height:14px;color:#8c8c8c;transform:scaleX(0.9992);">Index</span>
<span class="t" style="left:193.0px;top:186.69px;font-size:11px;line-height:14px;color:#8c8c8c;transform:scaleX(1.0000);">ID</span>
<span class="t" style="left:376.0px;top:186.69px;font-size:11px;line-height:14px;color:#8c8c8c;transform:scaleX(0.9774);">Summary</span>
<span class="t" style="left:42.3px;top:208.79px;font-size:11px;line-height:14px;color:#1e1e1e;transform:scaleX(0.9518);">FuelSysRequirements</span>
<span class="t" style="left:61.0px;top:231.79px;font-size:11px;line-height:14px;color:#1e1e1e;transform:scaleX(1.0269);">Import1</span>
<span class="t" style="left:115.0px;top:231.79px;font-size:11px;line-height:14px;color:#1e1e1e;transform:scaleX(0.9558);">FuelSysDesignDescription</span>
<span class="t" style="left:289.3px;top:231.79px;font-size:11px;line-height:14px;color:#1e1e1e;transform:scaleX(0.9642);">References to FuelSysDesignDescription.docx</span>
<span class="t" style="left:61.0px;top:254.79px;font-size:11px;line-height:14px;color:#1e1e1e;transform:scaleX(1.0376);">Import2</span>
<span class="t" style="left:115.0px;top:254.79px;font-size:11px;line-height:14px;color:#1e1e1e;transform:scaleX(0.9648);">FuelSysTestScenarios!Test Scen...</span>
<span class="t" style="left:289.3px;top:254.79px;font-size:11px;line-height:14px;color:#1e1e1e;transform:scaleX(0.9730);">References to FuelSysTestScenarios.xlsx (T...</span>
<span class="t" style="left:77.3px;top:277.79px;font-size:11px;line-height:14px;color:#1e1e1e;transform:scaleX(0.8163);">1</span>
<span class="t" style="left:115.0px;top:277.79px;font-size:11px;line-height:14px;color:#1e1e1e;transform:scaleX(0.9861);">T1.1.1-1</span>
<span class="t" style="left:289.3px;top:277.79px;font-size:11px;line-height:14px;color:#1e1e1e;transform:scaleX(1.0065);">T1.1.1-1: Driving scenario #1 The simulatio...</span>
<span class="t" style="left:77.0px;top:300.79px;font-size:11px;line-height:14px;color:#1e1e1e;transform:scaleX(0.9143);">2</span>
<span class="t" style="left:115.0px;top:300.79px;font-size:11px;line-height:14px;color:#1e1e1e;transform:scaleX(0.9861);">T1.2.1-1</span>
<span class="t" style="left:289.3px;top:300.79px;font-size:11px;line-height:14px;color:#1e1e1e;transform:scaleX(1.0033);">T1.2.1-1: Throttle Sensor Short to Ground, ...</span>
<span class="t" style="left:77.0px;top:323.79px;font-size:11px;line-height:14px;color:#1e1e1e;transform:scaleX(0.9143);">3</span>
<span class="t" style="left:115.0px;top:323.79px;font-size:11px;line-height:14px;color:#1e1e1e;transform:scaleX(1.0008);">T1.2.1-2</span>
<span class="t" style="left:289.3px;top:323.79px;font-size:11px;line-height:14px;color:#1e1e1e;transform:scaleX(1.0040);">T1.2.1-2: Throttle Sensor Short to VBatt</span>
<span class="t" style="left:76.8px;top:346.79px;font-size:11px;line-height:14px;color:#1e1e1e;transform:scaleX(0.9796);">4</span>
<span class="t" style="left:115.0px;top:346.79px;font-size:11px;line-height:14px;color:#1e1e1e;transform:scaleX(0.9910);">T1.2.1-3</span>
<span class="t" style="left:289.3px;top:346.79px;font-size:11px;line-height:14px;color:#1e1e1e;transform:scaleX(0.9837);">T1.2.1-3: Manifold Pressure Sensor Short t...</span>
<span class="t" style="left:77.0px;top:369.79px;font-size:11px;line-height:14px;color:#1e1e1e;transform:scaleX(0.9143);">5</span>
<span class="t" style="left:115.0px;top:369.79px;font-size:11px;line-height:14px;color:#1e1e1e;transform:scaleX(1.0008);">T1.2.1-4</span>
<span class="t" style="left:289.3px;top:369.79px;font-size:11px;line-height:14px;color:#1e1e1e;transform:scaleX(0.9837);">T1.2.1-4: Manifold Pressure Sensor Short t...</span>
<span class="t" style="left:77.0px;top:392.79px;font-size:11px;line-height:14px;color:#1e1e1e;transform:scaleX(0.9143);">6</span>
<span class="t" style="left:115.0px;top:392.79px;font-size:11px;line-height:14px;color:#1e1e1e;transform:scaleX(0.9910);">T1.2.1-5</span>
<span class="t" style="left:289.3px;top:392.79px;font-size:11px;line-height:14px;color:#1e1e1e;transform:scaleX(0.9911);">T1.2.1-5: Oxygen Sensor Short to VBatt</span>
<span class="t" style="left:77.0px;top:415.79px;font-size:11px;line-height:14px;color:#1e1e1e;transform:scaleX(0.9143);">7</span>
<span class="t" style="left:115.0px;top:415.79px;font-size:11px;line-height:14px;color:#1e1e1e;transform:scaleX(0.9910);">T1.2.1-6</span>
<span class="t" style="left:289.3px;top:415.79px;font-size:11px;line-height:14px;color:#1e1e1e;transform:scaleX(0.9830);">T1.2.1-6: Speed Sensor Short to Ground, O...</span>
<span class="t" style="left:77.0px;top:438.79px;font-size:11px;line-height:14px;color:#1e1e1e;transform:scaleX(0.9143);">8</span>
<span class="t" style="left:115.0px;top:438.79px;font-size:11px;line-height:14px;color:#1e1e1e;transform:scaleX(0.9861);">T1.2.2-1</span>
<span class="t" style="left:289.3px;top:438.79px;font-size:11px;line-height:14px;color:#1e1e1e;transform:scaleX(0.9853);">T1.2.2-1: Throttle Sensor and MAP Sensor f...</span>
<span class="t" style="left:61.0px;top:461.79px;font-size:11px;line-height:14px;color:#1e1e1e;transform:scaleX(1.0376);">Import3</span>
<span class="t" style="left:115.0px;top:461.79px;font-size:11px;line-height:14px;color:#1e1e1e;transform:scaleX(0.9613);">FuelSysRequirementsSpecification</span>
<span class="t" style="left:289.3px;top:461.79px;font-size:11px;line-height:14px;color:#1e1e1e;transform:scaleX(0.9594);">References to FuelSysRequirementsSpecific...</span>
<span class="t" style="left:77.3px;top:484.79px;font-size:11px;line-height:14px;color:#1e1e1e;transform:scaleX(0.8163);">1</span>
<span class="t" style="left:115.0px;top:484.79px;font-size:11px;line-height:14px;color:#1e1e1e;transform:scaleX(0.9932);">Fault Tolerant Fuel Control System</span>
<span class="t" style="left:289.3px;top:484.79px;font-size:11px;line-height:14px;color:#1e1e1e;transform:scaleX(0.9855);">Fault Tolerant Fuel Control System</span>
<span class="t" style="left:77.0px;top:507.79px;font-size:11px;line-height:14px;color:#1e1e1e;transform:scaleX(0.9143);">2</span>
<span class="t" style="left:115.0px;top:507.79px;font-size:11px;line-height:14px;color:#1e1e1e;transform:scaleX(0.9798);">1. Functional Requirements</span>
<span class="t" style="left:289.3px;top:507.79px;font-size:11px;line-height:14px;color:#1e1e1e;transform:scaleX(0.9730);">Functional Requirements</span>
<span class="t" style="left:545.3px;top:159.59px;font-size:11px;line-height:14px;color:#1e1e1e;transform:scaleX(0.9702);">Requirement: FuelSysDesignDescription</span>
<span class="t" style="left:546.0px;top:185.79px;font-size:11px;line-height:14px;color:#1e1e1e;transform:scaleX(0.9665);">Details</span>
<span class="t" style="left:556.5px;top:212.04px;font-size:12px;line-height:16px;color:#000;font-weight:700;transform:scaleX(1.0746);">Requirement Interchange</span>
<span class="t" style="left:556.5px;top:290.04px;font-size:12px;line-height:16px;color:#000;font-weight:700;transform:scaleX(1.0344);">Properties</span>
<span class="t" style="left:556.5px;top:320.04px;font-size:12px;line-height:16px;color:#000;font-weight:700;transform:scaleX(0.9827);">Links</span>
<span class="t" style="left:556.5px;top:350.04px;font-size:12px;line-height:16px;color:#000;font-weight:700;transform:scaleX(1.0288);">Comments</span>
<span class="t" style="left:562.3px;top:239.59px;font-size:11px;line-height:14px;color:#1e1e1e;transform:scaleX(0.9638);">Update</span>
<span class="t" style="left:645.0px;top:239.59px;font-size:11px;line-height:14px;color:#1e1e1e;transform:scaleX(0.9749);">Export</span>
<span class="t" style="left:718.0px;top:239.59px;font-size:11px;line-height:14px;color:#1e1e1e;transform:scaleX(0.9646);">Unlock all</span>
<span class="t" style="left:542.0px;top:263.69px;font-size:11px;line-height:14px;color:#1e1e1e;transform:scaleX(1.0052);">Status: The document is up-to-date.</span>
<span class="t" style="left:548.0px;top:379.79px;font-size:11px;line-height:14px;color:#1e1e1e;transform:scaleX(0.9742);">Add Comment</span>
<span class="t" style="left:542.0px;top:406.19px;font-size:11px;line-height:14px;color:#1e1e1e;transform:scaleX(0.9814);">No comments</span>
</body></html>
